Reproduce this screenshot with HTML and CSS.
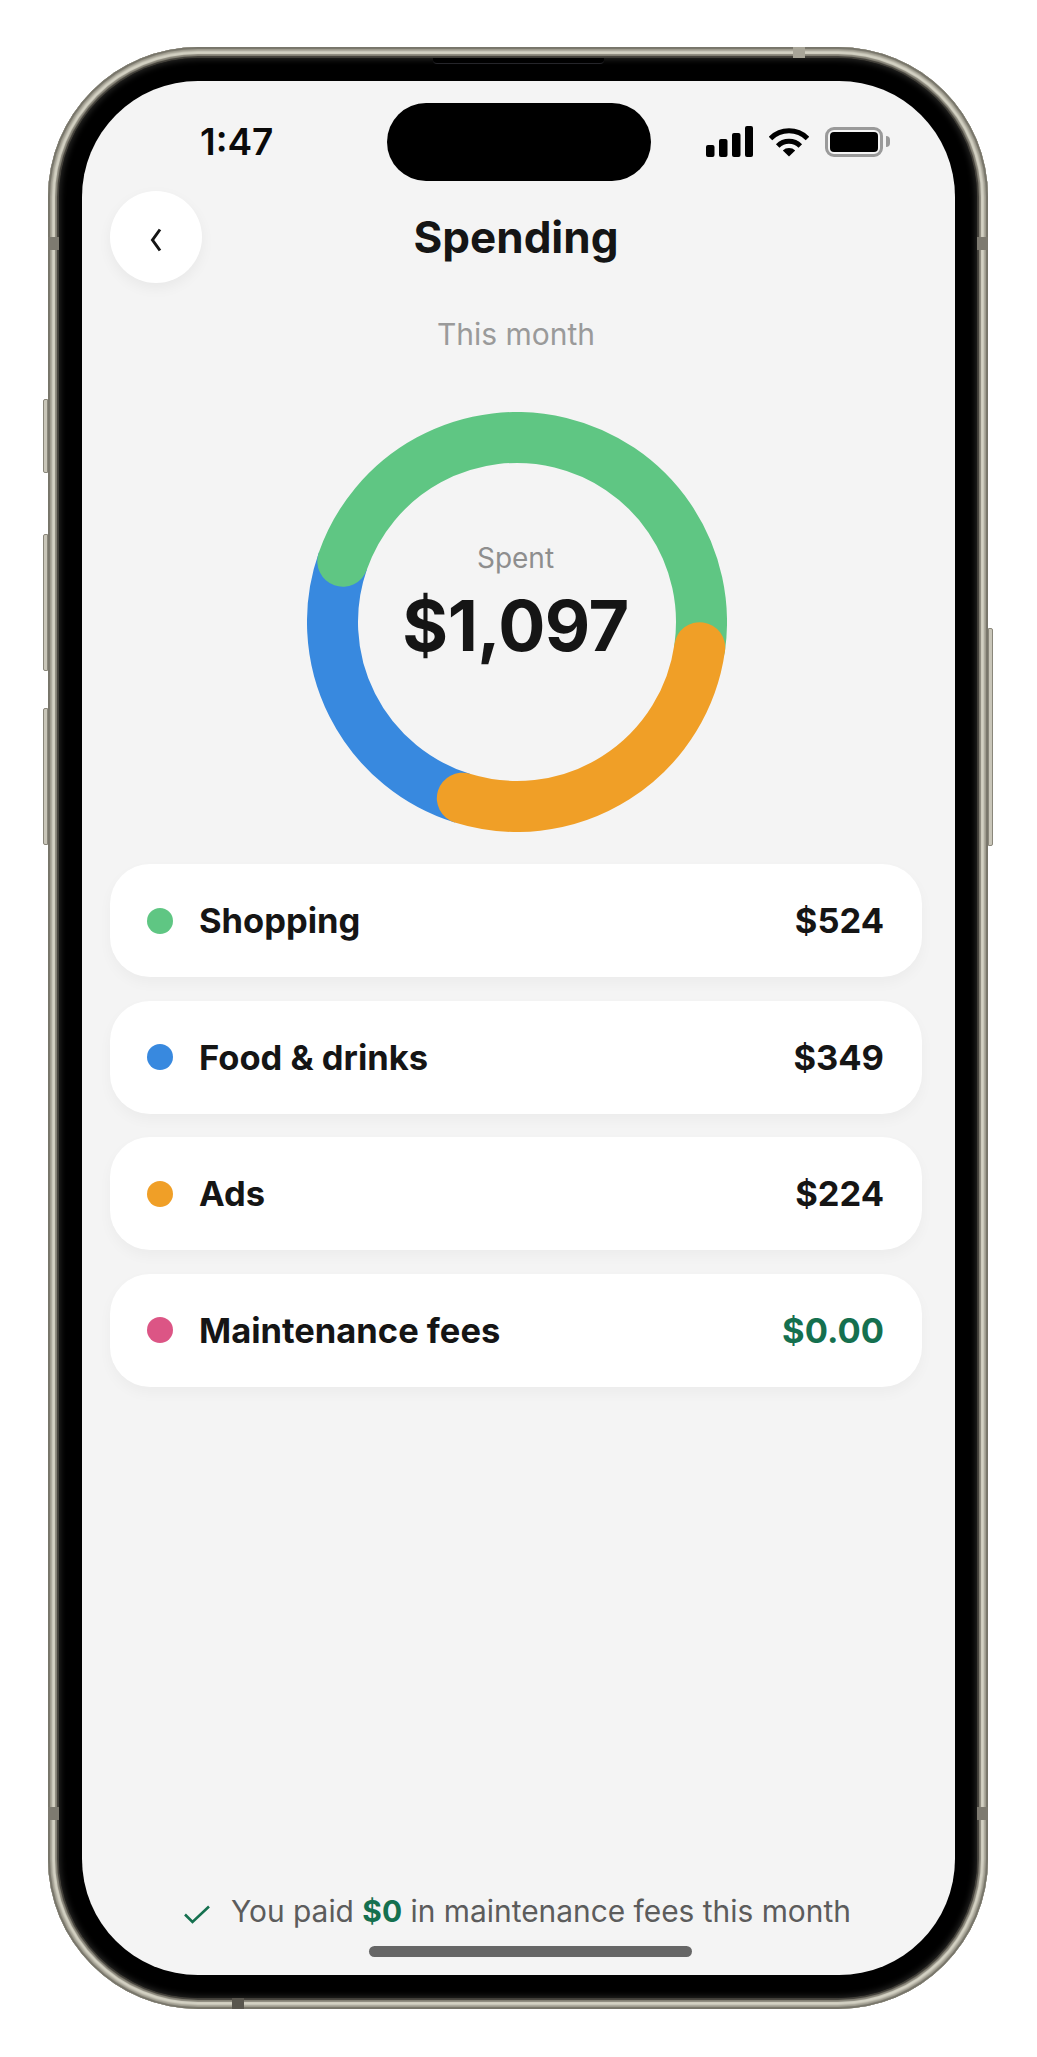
FILE: index.html
```html
<!DOCTYPE html>
<html lang="en">
<head>
    <meta charset="UTF-8">
    <meta name="viewport" content="width=device-width, initial-scale=1.0">
    <title>Spending</title>
    <link rel="stylesheet" href="styles.css">
</head>
<body>
    <div class="phone">
        <!-- hardware bits that sit on the frame -->
        <span class="side-btn side-btn-action"></span>
        <span class="side-btn side-btn-up"></span>
        <span class="side-btn side-btn-down"></span>
        <span class="side-btn side-btn-power"></span>
        <span class="band band-left-top"></span>
        <span class="band band-right-top"></span>
        <span class="band band-left-bottom"></span>
        <span class="band band-right-bottom"></span>
        <span class="band band-top"></span>
        <span class="band band-bottom"></span>
        <span class="speaker"></span>
        <span class="island"></span>

        <div class="bezel">
            <div class="screen">
                <div class="status-bar">
                    <span class="time">1:47</span>
                    <div class="status-icons">
                        <svg class="icon-signal" width="47" height="31" viewBox="0 0 47 31">
                            <rect x="0" y="19" width="8.5" height="12" rx="2"/>
                            <rect x="13" y="13" width="8.5" height="18" rx="2"/>
                            <rect x="26" y="7" width="8.5" height="24" rx="2"/>
                            <rect x="39" y="0" width="8" height="31" rx="2"/>
                        </svg>
                        <svg class="icon-wifi" width="40" height="30" viewBox="0 0 40 30">
                            <path d="M1.5 11.5A26.2 26.2 0 0 1 38.5 11.5" fill="none" stroke="#000" stroke-width="5"/>
                            <path d="M8.7 19A16 16 0 0 1 31.3 19" fill="none" stroke="#000" stroke-width="5"/>
                            <path d="M20 29.5L13.8 23.6A9 9 0 0 1 26.2 23.6Z"/>
                        </svg>
                        <div class="battery">
                            <span class="battery-level"></span>
                        </div>
                        <span class="battery-nub"></span>
                    </div>
                </div>

                <div class="content">
                    <div class="header">
                        <button class="back-btn" type="button">
                            <svg width="12" height="24" viewBox="0 0 12 24">
                                <path d="M10 1.5L2.5 12L10 22.5" fill="none" stroke="#151515" stroke-width="3"/>
                            </svg>
                        </button>
                        <h1 class="title">Spending</h1>
                    </div>

                    <p class="period">This month</p>

                    <div class="chart">
                        <svg class="donut" width="420" height="420" viewBox="0 0 420 420">
                            <path d="M155.3 386.2A184.5 184.5 0 0 1 35.8 149.2" fill="none" stroke="#3889df" stroke-width="51"/>
                            <path d="M35.8 149.2A184.5 184.5 0 0 1 392.7 235.7" fill="none" stroke="#5fc683" stroke-width="51" stroke-linecap="round"/>
                            <path d="M392.7 235.7A184.5 184.5 0 0 1 155.3 386.2" fill="none" stroke="#f09f27" stroke-width="51" stroke-linecap="round"/>
                        </svg>
                        <div class="chart-center">
                            <span class="chart-label">Spent</span>
                            <span class="chart-total">$1,097</span>
                        </div>
                    </div>

                    <div class="list">
                        <div class="row">
                            <span class="dot dot-green"></span>
                            <span class="row-name">Shopping</span>
                            <span class="row-amount">$524</span>
                        </div>
                        <div class="row">
                            <span class="dot dot-blue"></span>
                            <span class="row-name">Food &amp; drinks</span>
                            <span class="row-amount">$349</span>
                        </div>
                        <div class="row">
                            <span class="dot dot-orange"></span>
                            <span class="row-name">Ads</span>
                            <span class="row-amount">$224</span>
                        </div>
                        <div class="row">
                            <span class="dot dot-pink"></span>
                            <span class="row-name">Maintenance fees</span>
                            <span class="row-amount row-amount-free">$0.00</span>
                        </div>
                    </div>
                </div>

                <div class="footer">
                    <svg width="26" height="19" viewBox="0 0 26 19">
                        <path d="M1 9.5L8.5 17L25 1.5" fill="none" stroke="#15704f" stroke-width="2.6"/>
                    </svg>
                    <p class="footer-text">You paid <strong>$0</strong> in maintenance fees this month</p>
                </div>
                <div class="home-bar"></div>
            </div>
        </div>
    </div>
</body>
</html>
```

FILE: styles.css
```css
* {
    box-sizing: border-box;
}
body {
    margin: 0;
    padding: 47px 49px 48px 48px;
    background-color: #ffffff;
    font-family: Inter, "Liberation Sans", sans-serif;
    color: #151515;
}
.phone {
    position: relative;
    height: 1962px;
    padding: 11px;
    border-radius: 150px;
    background-color: #403e38;
    box-shadow:
        inset 0 0 1px 2px #77756a,
        inset 0 0 2px 4px #a09d90,
        inset 0 0 1px 7px #d6d4c6,
        inset 0 0 1px 9px #8a877b;
}
.bezel {
    height: 100%;
    padding: 23px 22px 23px 23px;
    border-radius: 139px;
    background-color: #000000;
    box-shadow: inset 0 0 6px 1px #2c2c2a;
}
.screen {
    display: flex;
    flex-direction: column;
    height: 100%;
    border-radius: 116px;
    background-color: #f4f4f4;
    overflow: hidden;
}

/* frame details */
.side-btn {
    position: absolute;
    width: 5px;
    border: 1px solid #8a877b;
    background-color: #c9c6b9;
    border-radius: 2px 0 0 2px;
}
.side-btn-action {
    left: -5px;
    top: 352px;
    height: 74px;
}
.side-btn-up {
    left: -5px;
    top: 487px;
    height: 137px;
}
.side-btn-down {
    left: -5px;
    top: 661px;
    height: 137px;
}
.side-btn-power {
    right: -5px;
    top: 581px;
    height: 218px;
    border-radius: 0 2px 2px 0;
}
.band {
    position: absolute;
    background-color: #7d7a70;
}
.band-left-top,
.band-right-top,
.band-left-bottom,
.band-right-bottom {
    width: 11px;
    height: 13px;
}
.band-left-top {
    left: 0;
    top: 190px;
}
.band-right-top {
    right: 0;
    top: 190px;
}
.band-left-bottom {
    left: 0;
    top: 1760px;
}
.band-right-bottom {
    right: 0;
    top: 1760px;
}
.band-top,
.band-bottom {
    width: 12px;
    height: 11px;
}
.band-top {
    left: 745px;
    top: 0;
    background-color: #a8a598;
}
.band-bottom {
    left: 184px;
    bottom: 0;
    background-color: #59564e;
}
.speaker {
    position: absolute;
    z-index: 1;
    left: 385px;
    top: 11px;
    width: 171px;
    height: 6px;
    background-color: #000000;
    border-bottom: 1px solid #25252a;
    border-radius: 0 0 4px 4px;
}
.island {
    position: absolute;
    z-index: 1;
    left: 339px;
    top: 56px;
    width: 264px;
    height: 78px;
    border-radius: 39px;
    background-color: #000000;
}

/* status bar */
.status-bar {
    display: flex;
    align-items: center;
    flex: none;
    height: 110px;
    padding: 11px 65px 0 118px;
}
.time {
    font-size: 37px;
    font-weight: 600;
    line-height: 40px;
    color: #0a0a0a;
}
.status-icons {
    display: flex;
    align-items: center;
    margin-left: auto;
}
.icon-signal {
    margin-right: 16px;
}
.icon-wifi {
    margin-right: 16px;
}
.battery {
    width: 58px;
    height: 30px;
    padding: 2px;
    border: 3px solid #9a9a9a;
    border-radius: 9px;
}
.battery-level {
    display: block;
    height: 100%;
    border-radius: 4px;
    background-color: #000000;
}
.battery-nub {
    width: 4px;
    height: 11px;
    margin-left: 3px;
    border-radius: 0 4px 4px 0;
    background-color: #9a9a9a;
}

/* main content */
.content {
    padding: 0 33px 0 28px;
}
.header {
    display: grid;
    grid-template-columns: 92px 1fr 92px;
    align-items: center;
}
.back-btn {
    display: flex;
    align-items: center;
    justify-content: center;
    width: 92px;
    height: 92px;
    padding: 6px 0 0;
    border: none;
    border-radius: 50%;
    background-color: #ffffff;
    box-shadow: 0 5px 14px rgba(0, 0, 0, 0.05);
}
.title {
    margin: 0;
    font-size: 44px;
    font-weight: 700;
    line-height: 50px;
    text-align: center;
}
.period {
    margin: 33px 0 60px;
    font-size: 30px;
    line-height: 36px;
    text-align: center;
    color: #9a9a9a;
}
.chart {
    display: grid;
    justify-content: center;
    padding-left: 1px;
}
.donut {
    display: block;
    grid-area: 1 / 1;
}
.chart-center {
    grid-area: 1 / 1;
    display: flex;
    flex-direction: column;
    align-items: center;
    padding: 129px 2px 0 0;
}
.chart-label {
    font-size: 28px;
    line-height: 34px;
    color: #8e8e8e;
}
.chart-total {
    margin-top: 9px;
    font-size: 70px;
    font-weight: 700;
    line-height: 84px;
    letter-spacing: -0.5px;
}
.list {
    display: flex;
    flex-direction: column;
    gap: 23.67px;
    margin-top: 32px;
}
.row {
    display: flex;
    align-items: center;
    height: 113px;
    padding: 0 38px 0 37px;
    border-radius: 40px;
    background-color: #ffffff;
    box-shadow: 0 6px 14px rgba(0, 0, 0, 0.035);
}
.dot {
    width: 26px;
    height: 26px;
    margin-right: 26px;
    border-radius: 50%;
}
.dot-green {
    background-color: #5fc683;
}
.dot-blue {
    background-color: #3889df;
}
.dot-orange {
    background-color: #f09f27;
}
.dot-pink {
    background-color: #dc5585;
}
.row-name {
    font-size: 34.5px;
    font-weight: 700;
}
.row-amount {
    margin-left: auto;
    font-size: 34.5px;
    font-weight: 700;
}
.row-amount-free {
    color: #15704f;
}

/* footer */
.footer {
    display: flex;
    align-items: center;
    margin-top: auto;
    padding-left: 102px;
}
.footer svg {
    margin: 6px 21px 0 0;
}
.footer-text {
    margin: 0;
    font-size: 29.9px;
    line-height: 36px;
    color: #5c5c5c;
}
.footer-text strong {
    font-weight: 700;
    color: #15704f;
}
.home-bar {
    flex: none;
    width: 323px;
    height: 11px;
    margin: 17px 0 18px 287px;
    border-radius: 6px;
    background-color: #666666;
}
```
